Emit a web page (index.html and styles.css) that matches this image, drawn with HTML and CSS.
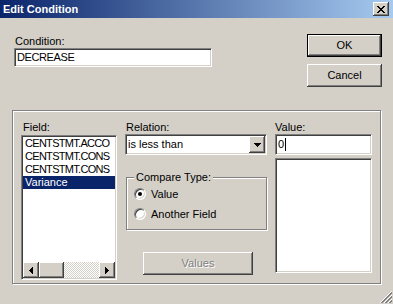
FILE: index.html
```html
<!DOCTYPE html>
<html lang="en">
<head>
    <meta charset="UTF-8">
    <meta name="viewport" content="width=device-width, initial-scale=1.0">
    <title>Edit Condition</title>
    <link rel="stylesheet" href="styles.css">
</head>
<body>
    <div class="titlebar">
        <span class="title">Edit Condition</span>
        <div class="close-btn">
            <svg width="8" height="7" viewBox="0 0 8 7" shape-rendering="crispEdges"><path d="M0 0h2v1H0zM6 0h2v1H6zM1 1h2v1H1zM5 1h2v1H5zM2 2h4v1H2zM3 3h2v1H3zM2 4h4v1H2zM1 5h2v1H1zM5 5h2v1H5zM0 6h2v1H0zM6 6h2v1H6z" fill="#000"/></svg>
        </div>
    </div>

    <div class="top">
        <div class="condition">
            <div class="label">Condition:</div>
            <div class="text-field condition-input">DECREASE</div>
        </div>
        <div class="buttons">
            <div class="btn default">OK</div>
            <div class="btn">Cancel</div>
        </div>
    </div>

    <div class="group">
        <div class="col field-col">
            <div class="label">Field:</div>
            <div class="listbox field-list">
                <div class="items">
                    <div class="item">CENTSTMT.ACCO</div>
                    <div class="item">CENTSTMT.CONS</div>
                    <div class="item">CENTSTMT.CONS</div>
                    <div class="item selected">Variance</div>
                </div>
                <div class="hscroll">
                    <div class="sb-btn">
                        <svg width="4" height="7" viewBox="0 0 4 7" shape-rendering="crispEdges"><path d="M3 0h1v7H3zM2 1h1v5H2zM1 2h1v3H1zM0 3h1v1H0z" fill="#000"/></svg>
                    </div>
                    <div class="sb-thumb"></div>
                    <div class="sb-track"></div>
                    <div class="sb-btn">
                        <svg width="4" height="7" viewBox="0 0 4 7" shape-rendering="crispEdges"><path d="M0 0h1v7H0zM1 1h1v5H1zM2 2h1v3H2zM3 3h1v1H3z" fill="#000"/></svg>
                    </div>
                </div>
            </div>
        </div>

        <div class="col relation-col">
            <div class="label">Relation:</div>
            <div class="text-field combo">
                <span>is less than</span>
                <div class="combo-btn">
                    <svg width="7" height="4" viewBox="0 0 7 4" shape-rendering="crispEdges"><path d="M0 0h7v1H0zM1 1h5v1H1zM2 2h3v1H2zM3 3h1v1H3z" fill="#000"/></svg>
                </div>
            </div>
            <fieldset class="compare">
                <legend>Compare Type:</legend>
                <div class="radio-row"><span class="radio checked"></span>Value</div>
                <div class="radio-row"><span class="radio"></span>Another Field</div>
            </fieldset>
            <div class="btn disabled values-btn">Values</div>
        </div>

        <div class="col value-col">
            <div class="label">Value:</div>
            <div class="text-field value-input">0<span class="caret"></span></div>
            <div class="listbox value-list"></div>
        </div>
    </div>

    <svg class="grip" width="12" height="12" viewBox="0 0 12 12">
        <path d="M12 0L0 12M12 4L4 12M12 8L8 12" stroke="#fff" stroke-width="1"/>
        <path d="M12 1L1 12M12 2L2 12M12 5L5 12M12 6L6 12M12 9L9 12M12 10L10 12" stroke="#808080" stroke-width="1"/>
    </svg>
</body>
</html>
```

FILE: styles.css
```css
* {
    box-sizing: border-box;
}
body {
    margin: 0;
    width: 393px;
    height: 304px;
    overflow: hidden;
    position: relative;
    background-color: #d4d0c8;
    font-family: "Liberation Sans", Arial, sans-serif;
    font-size: 11px;
    line-height: 13px;
    color: #000;
}
.titlebar {
    height: 18px;
    display: flex;
    align-items: center;
    justify-content: space-between;
    padding: 0 4px 0 3px;
    background: linear-gradient(to right, #0a246a, #a6caf0);
}
.title {
    color: white;
    font-weight: bold;
}
.close-btn {
    width: 16px;
    height: 14px;
    display: flex;
    align-items: center;
    justify-content: center;
    background-color: #d4d0c8;
    box-shadow: inset -1px -1px #404040, inset 1px 1px #fff, inset -2px -2px #808080;
}
.top {
    display: flex;
    justify-content: space-between;
    padding: 16px 11px 0 14px;
}
.condition .label {
    margin: 1px 0 0 1px;
}
.text-field {
    border: 1px solid;
    border-color: #808080 #fff #fff #808080;
    box-shadow: inset 1px 1px #404040, inset -1px -1px #d4d0c8;
    background-color: white;
    padding: 1px 1px 1px 2px;
}
.condition-input {
    width: 198px;
    height: 19px;
    line-height: 15px;
    padding-left: 2px;
    letter-spacing: -0.4px;
}
.buttons {
    display: flex;
    flex-direction: column;
    gap: 7px;
}
.btn {
    width: 75px;
    height: 23px;
    display: flex;
    align-items: center;
    justify-content: center;
    background-color: #d4d0c8;
    box-shadow: inset -1px -1px #404040, inset 1px 1px #fff, inset -2px -2px #808080;
}
.btn.default {
    border: 1px solid #000;
}
.btn.disabled {
    color: #808080;
    text-shadow: 1px 1px #fff;
}
.group {
    margin: 23px 0 0 12px;
    width: 369px;
    height: 174px;
    border: 1px solid #808080;
    box-shadow: inset 1px 1px #fff, 1px 1px #fff;
    display: flex;
    gap: 8px;
    padding: 10px 0 0 8px;
}
.col {
    display: flex;
    flex-direction: column;
}
.field-col {
    width: 96px;
}
.field-col .label {
    margin-left: 2px;
}
.listbox {
    border: 1px solid;
    border-color: #808080 #fff #fff #808080;
    box-shadow: inset 1px 1px #404040, inset -1px -1px #d4d0c8;
    background-color: white;
    padding: 1px;
}
.field-list {
    margin-top: 1px;
    height: 145px;
    display: flex;
    flex-direction: column;
}
.items {
    flex: 1;
    overflow: hidden;
}
.item {
    height: 13px;
    padding-left: 2px;
    white-space: nowrap;
    letter-spacing: -0.7px;
}
.item.selected {
    background-color: #0a246a;
    color: white;
    letter-spacing: 0;
}
.hscroll {
    height: 16px;
    display: flex;
}
.sb-btn {
    width: 16px;
    height: 16px;
    display: flex;
    align-items: center;
    justify-content: center;
    background-color: #d4d0c8;
    box-shadow: inset -1px -1px #404040, inset 1px 1px #fff, inset -2px -2px #808080;
}
.sb-thumb {
    width: 25px;
    background-color: #d4d0c8;
    box-shadow: inset -1px -1px #404040, inset 1px 1px #fff, inset -2px -2px #808080;
}
.sb-track {
    flex: 1;
    background: repeating-conic-gradient(#fff 0 25%, #d4d0c8 0 50%) 0 0 / 2px 2px;
}
.relation-col {
    width: 142px;
}
.relation-col .label {
    margin-left: 1px;
}
.combo {
    height: 21px;
    display: flex;
    align-items: center;
    justify-content: space-between;
    padding: 1px 1px 1px 2px;
}
.combo-btn {
    width: 16px;
    height: 17px;
    display: flex;
    align-items: center;
    justify-content: center;
    background-color: #d4d0c8;
    box-shadow: inset -1px -1px #404040, inset 1px 1px #fff, inset -2px -2px #808080;
}
.compare {
    margin: 16px 0 0 1px;
    width: 141px;
    height: 59px;
    padding: 4px 0 0 7px;
    border: 1px solid #808080;
    box-shadow: inset 1px 1px #fff, 1px 1px #fff;
    min-inline-size: 0;
}
.compare legend {
    padding: 0 2px;
    background-color: #d4d0c8;
    line-height: 13px;
}
.radio-row {
    display: flex;
    align-items: center;
    gap: 5px;
    height: 12px;
    line-height: 12px;
    margin-bottom: 8px;
}
.radio {
    width: 12px;
    height: 12px;
    border-radius: 50%;
    border: 1px solid;
    border-color: #808080 #fff #fff #808080;
    box-shadow: inset 1px 1px #404040, inset -1px -1px #d4d0c8;
    background-color: white;
    position: relative;
}
.radio.checked::after {
    content: "";
    position: absolute;
    left: 3px;
    top: 3px;
    width: 4px;
    height: 4px;
    border-radius: 50%;
    background-color: #000;
}
.values-btn {
    margin: 22px 0 0 18px;
    width: 110px;
}
.value-col {
    width: 97px;
}
.value-input {
    height: 21px;
    line-height: 17px;
    display: flex;
    align-items: center;
}
.caret {
    display: inline-block;
    width: 1px;
    height: 13px;
    background-color: #000;
    margin-left: 1px;
}
.value-list {
    margin-top: 3px;
    height: 115px;
}
.grip {
    position: absolute;
    right: 1px;
    bottom: 1px;
}
```
